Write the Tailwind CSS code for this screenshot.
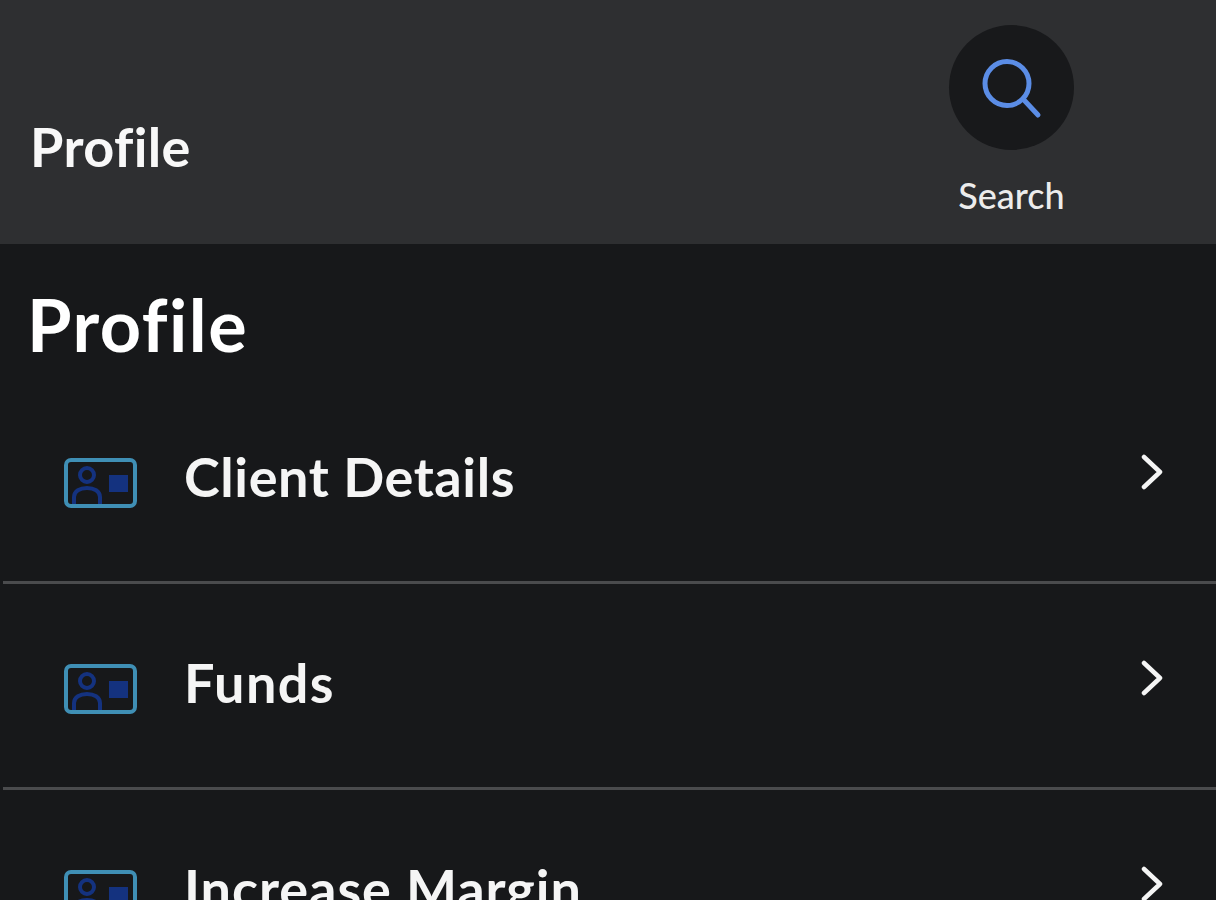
<!DOCTYPE html>
<html>
<head>
<meta charset="utf-8">
<script src="https://cdn.jsdelivr.net/npm/@tailwindcss/browser@4"></script>
</head>
<body class="m-0 bg-[#17181a]">
<div class="w-[1216px] h-[900px] overflow-hidden bg-[#17181a] text-white font-['Lato','Noto_Sans',sans-serif]">
  <header class="h-[244px] bg-[#2e2f31] flex justify-between pl-[30px] pr-[142px]">
    <h2 class="mt-[117px] text-[54px] leading-[60px] tracking-[0.4px] font-bold text-[#f8f8f8]">Profile</h2>
    <div class="flex flex-col items-center pt-[25px]">
      <div class="w-[125px] h-[125px] rounded-full bg-[#18191b] flex items-center justify-center">
        <svg width="64" height="64" viewBox="0 0 64 64" fill="none" stroke="#5b8de6" stroke-width="5" stroke-linecap="round"><circle cx="27" cy="27.5" r="22"/><line x1="44" y1="44" x2="58" y2="59"/></svg>
      </div>
      <span class="mt-[25px] text-[36px] leading-[40px] font-medium text-[#ececec]">Search</span>
    </div>
  </header>
  <h1 class="ml-[27px] mt-[44px] text-[72px] leading-[72px] tracking-[1.5px] font-bold text-white">Profile</h1>
  <div class="mt-[18px]">
    <div class="h-[206px] ml-[3px] border-b-[3px] border-[#4a4b4d] flex items-start pl-[61px] pr-[53px]">
      <svg class="mt-[80px] shrink-0" width="73" height="50" viewBox="0 0 73 50" fill="none"><rect x="2" y="2" width="69" height="46" rx="5" stroke="#3f8fb5" stroke-width="4"/><circle cx="23" cy="17" r="7" stroke="#14327f" stroke-width="4"/><path d="M10 46v-7c0-6 6-9 13-9s13 3 13 9v7" stroke="#14327f" stroke-width="4"/><rect x="45" y="17" width="19" height="17" fill="#14327f"/></svg>
      <span class="ml-[47px] mt-[68px] text-[54px] leading-[62px] tracking-[0.6px] font-bold text-[#f5f5f5]">Client Details</span>
      <svg class="ml-auto mt-[76px] shrink-0" width="22" height="36" viewBox="0 0 22 36" fill="none" stroke="#f5f5f5" stroke-width="4.5" stroke-linecap="round" stroke-linejoin="round"><path d="M3 3 L19 18 L3 33"/></svg>
    </div>
    <div class="h-[206px] ml-[3px] border-b-[3px] border-[#4a4b4d] flex items-start pl-[61px] pr-[53px]">
      <svg class="mt-[80px] shrink-0" width="73" height="50" viewBox="0 0 73 50" fill="none"><rect x="2" y="2" width="69" height="46" rx="5" stroke="#3f8fb5" stroke-width="4"/><circle cx="23" cy="17" r="7" stroke="#14327f" stroke-width="4"/><path d="M10 46v-7c0-6 6-9 13-9s13 3 13 9v7" stroke="#14327f" stroke-width="4"/><rect x="45" y="17" width="19" height="17" fill="#14327f"/></svg>
      <span class="ml-[47px] mt-[68px] text-[54px] leading-[62px] tracking-[1.4px] font-bold text-[#f5f5f5]">Funds</span>
      <svg class="ml-auto mt-[76px] shrink-0" width="22" height="36" viewBox="0 0 22 36" fill="none" stroke="#f5f5f5" stroke-width="4.5" stroke-linecap="round" stroke-linejoin="round"><path d="M3 3 L19 18 L3 33"/></svg>
    </div>
    <div class="h-[206px] ml-[3px] flex items-start pl-[61px] pr-[53px]">
      <svg class="mt-[80px] shrink-0" width="73" height="50" viewBox="0 0 73 50" fill="none"><rect x="2" y="2" width="69" height="46" rx="5" stroke="#3f8fb5" stroke-width="4"/><circle cx="23" cy="17" r="7" stroke="#14327f" stroke-width="4"/><path d="M10 46v-7c0-6 6-9 13-9s13 3 13 9v7" stroke="#14327f" stroke-width="4"/><rect x="45" y="17" width="19" height="17" fill="#14327f"/></svg>
      <span class="ml-[47px] mt-[68px] text-[54px] leading-[62px] tracking-[0.95px] font-bold text-[#f5f5f5]">Increase Margin</span>
      <svg class="ml-auto mt-[76px] shrink-0" width="22" height="36" viewBox="0 0 22 36" fill="none" stroke="#f5f5f5" stroke-width="4.5" stroke-linecap="round" stroke-linejoin="round"><path d="M3 3 L19 18 L3 33"/></svg>
    </div>
  </div>
</div>
</body>
</html>
